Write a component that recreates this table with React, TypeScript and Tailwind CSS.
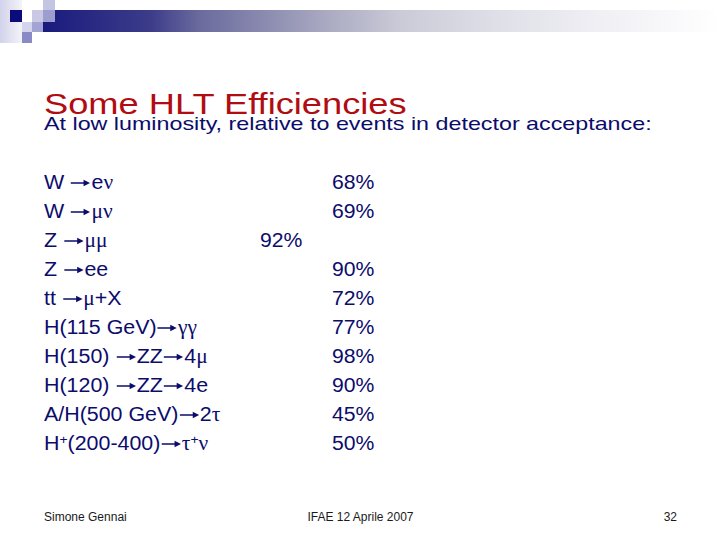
const sans = "font-['Liberation_Sans',Arial,sans-serif]"

function G({ children }: { children: React.ReactNode }) {
  // greek letters, set in a serif like the Symbol font of the original
  return <span className="font-['Liberation_Serif','DejaVu_Serif',serif]">{children}</span>
}

// thin Symbol-style right arrow, one em wide, sitting on the baseline
function Arrow() {
  return (
    <svg className="inline-block" width="20" height="12" viewBox="0 0 20 12" aria-label="→">
      <line x1="1" y1="5" x2="15" y2="5" stroke="currentColor" strokeWidth="1.3" />
      <polygon points="19,5 13,1.8 13,8.2" fill="currentColor" />
    </svg>
  )
}

const rows: { label: React.ReactNode; mid?: string; right?: string }[] = [
  { label: <>W <Arrow />e<G>ν</G></>, right: '68%' },
  { label: <>W <Arrow /><G>μν</G></>, right: '69%' },
  { label: <>Z <Arrow /><G>μμ</G></>, mid: '92%' },
  { label: <>Z <Arrow />ee</>, right: '90%' },
  { label: <>tt <Arrow /><G>μ</G>+X</>, right: '72%' },
  { label: <>H(115 GeV)<Arrow /><G>γγ</G></>, right: '77%' },
  { label: <>H(150) <Arrow />ZZ<Arrow />4<G>μ</G></>, right: '98%' },
  { label: <>H(120) <Arrow />ZZ<Arrow />4e</>, right: '90%' },
  { label: <>A/H(500 GeV)<Arrow />2<G>τ</G></>, right: '45%' },
  {
    label: (
      <>
        H<sup className="text-[13px]">+</sup>(200-400)<Arrow />
        <G>τ</G>
        <sup className="text-[13px]">+</sup>
        <G>ν</G>
      </>
    ),
    right: '50%',
  },
]

function Decoration() {
  return (
    <svg className="absolute left-0 top-0" width="56" height="44" viewBox="0 0 56 44">
      <defs>
        <linearGradient id="pale" x1="0" x2="1" y1="0" y2="0">
          <stop offset="0" stopColor="#d2d2eb" />
          <stop offset="1" stopColor="#f3f3f9" />
        </linearGradient>
      </defs>
      <rect x="0" y="0" width="22" height="43" fill="url(#pale)" />
      <rect x="10" y="10" width="12" height="12" fill="#0b0b7c" />
      <rect x="32" y="10" width="11" height="12" fill="#c9c9e6" />
      <rect x="43" y="0" width="12" height="10" fill="#c4c4e3" />
      <rect x="43" y="10" width="12" height="12" fill="#9d9dd0" />
      <rect x="22" y="22" width="10" height="10" fill="#d4d4ed" />
      <rect x="32" y="22" width="11" height="10" fill="#a4a4d4" />
      <rect x="22" y="32" width="10" height="11" fill="#8a8ac6" />
    </svg>
  )
}

export default function App() {
  return (
    <div className={`flex h-[540px] w-[720px] flex-col overflow-hidden bg-white ${sans}`}>
      {/* ── header band ── */}
      <div className="relative h-[44px]">
        <div className="ml-[43px] mt-[10px] h-[22px] bg-[linear-gradient(90deg,#1a1a7e_0%,#3c3c8a_16%,#6a6a9e_23%,#aaaac2_42%,#cbcbd8_53%,#dfdfe8_67%,#efeff4_82%,#ffffff_100%)]" />
        <Decoration />
      </div>

      {/* ── title ── */}
      <h1 className="ml-[44px] mt-[44px] w-max origin-left scale-x-[1.25] text-[29px] leading-[32px] text-[#b00c12]">
        Some HLT Efficiencies
      </h1>
      <p className="-mt-[8px] ml-[44px] w-max origin-left scale-x-[1.225] text-[19px] leading-[24px] text-[#0c0c6b]">
        At low luminosity, relative to events in detector acceptance:
      </p>

      {/* ── efficiencies ── */}
      <div className="ml-[44px] mt-[32px] text-[20px] leading-[29px] text-[#0c0c6b]">
        {rows.map((r, i) => (
          <div key={i} className="grid h-[29px] grid-cols-[216px_72px_1fr]">
            <span className="w-max origin-left scale-x-[1.07] whitespace-nowrap">{r.label}</span>
            <span className="w-max origin-left scale-x-[1.06]">{r.mid}</span>
            <span className="w-max origin-left scale-x-[1.06]">{r.right}</span>
          </div>
        ))}
      </div>

      {/* ── footer ── */}
      <div className="mt-auto grid grid-cols-3 pb-[16px] pl-[44px] pr-[43px] text-[12px] leading-[14px] text-[#1a1a1a]">
        <span>Simone Gennai</span>
        <span className="text-center">IFAE 12 Aprile 2007</span>
        <span className="text-right">32</span>
      </div>
    </div>
  )
}
